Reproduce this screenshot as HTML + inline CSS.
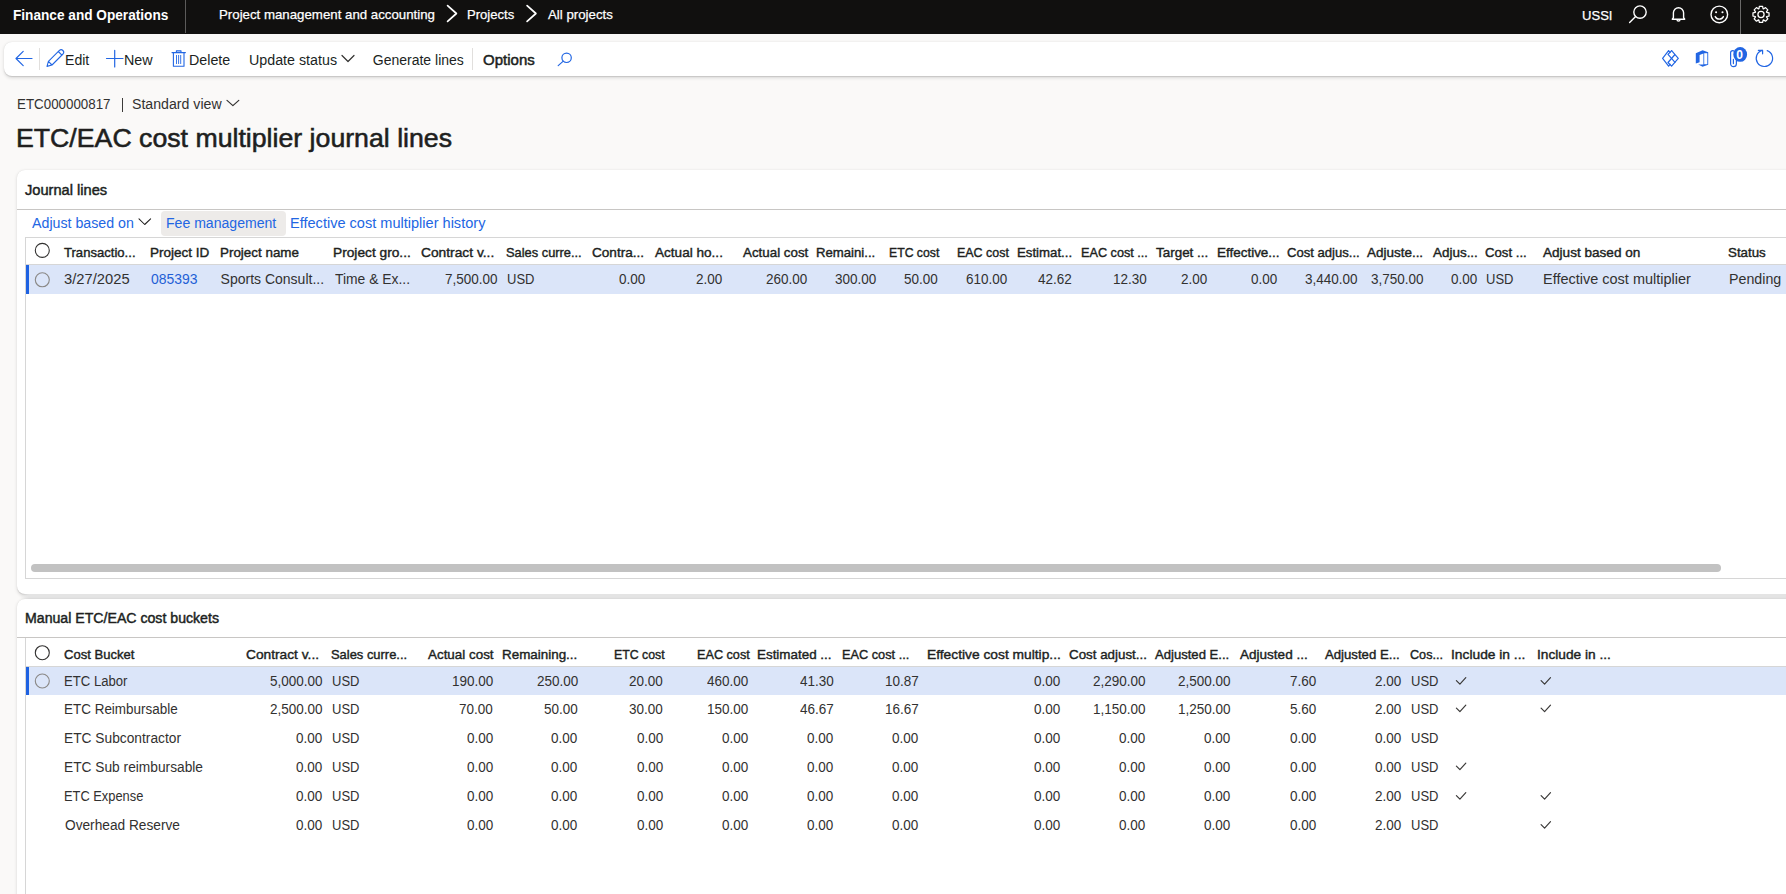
<!DOCTYPE html>
<html><head><meta charset="utf-8"><style>
html,body{margin:0;padding:0}
body{width:1786px;height:894px;overflow:hidden;position:relative;background:#faf9f8;font-family:"Liberation Sans",sans-serif}
.t{position:absolute;white-space:nowrap;line-height:1;transform-origin:0 0}
</style></head><body>
<div style="position:absolute;left:0px;top:0px;width:1786px;height:34px;background:#11100f"></div>
<div class="t" style="left:13.15px;top:8.14px;font-size:14px;color:#fff;font-weight:700;transform:scaleX(0.9739);">Finance and Operations</div>
<div style="position:absolute;left:185px;top:0px;width:1px;height:33px;background:#5c5b5a"></div>
<div class="t" style="left:218.90px;top:7.57px;font-size:13.5px;color:#fff;transform:scaleX(0.9822);-webkit-text-stroke:0.25px #fff;">Project management and accounting</div>
<div class="t" style="left:467.11px;top:7.57px;font-size:13.5px;color:#fff;transform:scaleX(0.9676);-webkit-text-stroke:0.25px #fff;">Projects</div>
<div class="t" style="left:547.70px;top:7.57px;font-size:13.5px;color:#fff;transform:scaleX(0.9817);-webkit-text-stroke:0.25px #fff;">All projects</div>
<svg style="position:absolute;left:0;top:0" width="1786" height="34"><g fill="none" stroke="#fff" stroke-width="1.4" stroke-linecap="round" stroke-linejoin="round"><path d="M447.6 5.6 L456.4 13.5 L447.6 21.4" stroke-width="1.7"/><path d="M527.1 5.6 L535.9 13.5 L527.1 21.4" stroke-width="1.7"/><circle cx="1640" cy="12.1" r="6.2"/><path d="M1635.6 16.6 L1629.6 22.4" stroke-width="1.4"/><path d="M1672.3 19.2 L1673.4 17.6 V12.8 A5.1 5.1 0 0 1 1683.6 12.8 V17.6 L1684.7 19.2 Z"/><path d="M1677 19.6 A1.5 1.5 0 0 0 1680 19.6"/><circle cx="1719.3" cy="14.4" r="8.3"/><path d="M1715.2 16.6 A4.6 4.6 0 0 0 1723.4 16.6"/></g><circle cx="1716.1" cy="12.2" r="1.05" fill="#fff"/><circle cx="1722.5" cy="12.2" r="1.05" fill="#fff"/><rect x="1740" y="0" width="1" height="34" fill="#6b6a69"/><g transform="translate(1761,14.4)" fill="none" stroke="#fff" stroke-width="1.25" stroke-linejoin="round"><path d="M-2.11 -5.62 L-1.63 -8.04 L1.63 -8.04 L2.11 -5.62 L2.48 -5.47 L4.53 -6.83 L6.83 -4.53 L5.47 -2.48 L5.62 -2.11 L8.04 -1.63 L8.04 1.63 L5.62 2.11 L5.47 2.48 L6.83 4.53 L4.53 6.83 L2.48 5.47 L2.11 5.62 L1.63 8.04 L-1.63 8.04 L-2.11 5.62 L-2.48 5.47 L-4.53 6.83 L-6.83 4.53 L-5.47 2.48 L-5.62 2.11 L-8.04 1.63 L-8.04 -1.63 L-5.62 -2.11 L-5.47 -2.48 L-6.83 -4.53 L-4.53 -6.83 L-2.48 -5.47 Z"/><circle r="3.1"/></g></svg>
<div class="t" style="left:1581.73px;top:8.57px;font-size:13.5px;color:#fff;transform:scaleX(0.9675);-webkit-text-stroke:0.25px #fff;">USSI</div>
<div style="position:absolute;left:4px;top:42px;width:1800px;height:34px;background:#fff;border-radius:8px;box-shadow:0 1.6px 3.6px rgba(0,0,0,.13),0 0.3px 0.9px rgba(0,0,0,.11)"></div>
<div style="position:absolute;left:39px;top:48px;width:1px;height:22px;background:#e1dfdd"></div>
<div style="position:absolute;left:472px;top:48px;width:1px;height:22px;background:#e1dfdd"></div>
<div class="t" style="left:64.87px;top:53.14px;font-size:14px;color:#201f1e;transform:scaleX(1.0055);">Edit</div>
<div class="t" style="left:124.35px;top:53.14px;font-size:14px;color:#201f1e;transform:scaleX(1.0233);">New</div>
<div class="t" style="left:188.85px;top:53.14px;font-size:14px;color:#201f1e;transform:scaleX(1.0194);">Delete</div>
<div class="t" style="left:248.98px;top:53.14px;font-size:14px;color:#201f1e;transform:scaleX(1.0191);">Update status</div>
<div class="t" style="left:372.77px;top:53.14px;font-size:14px;color:#201f1e;">Generate lines</div>
<div class="t" style="left:482.75px;top:52.72px;font-size:14.5px;color:#201f1e;transform:scaleX(1.0353);-webkit-text-stroke:0.5px #201f1e;">Options</div>
<svg style="position:absolute;left:0;top:0" width="1786" height="80"><g fill="none" stroke="#2266e3" stroke-width="1.2" stroke-linecap="round" stroke-linejoin="round"><path d="M16 58.5 H32 M23.2 51.3 L16 58.5 L23.2 65.7"/><path d="M47 66.4 L48.4 61.4 L59.4 50.4 A2.55 2.55 0 0 1 63 54 L52 65 Z M48.4 61.4 L52 65 M58.3 51.5 L61.9 55.1" stroke-width="1.1"/><path d="M106.5 58.5 H123 M114.7 50.3 V67"/><path d="M172 52.6 H185.4 M176.4 52.6 V50.9 H181 V52.6 M173.4 52.6 V66.2 H184 V52.6" stroke-width="1.1"/><path d="M176.5 55.4 V63.6 M178.6 55.4 V63.6 M180.7 55.4 V63.6" stroke-width="0.9"/><path d="M342 55.5 L348 61.5 L354 55.5" stroke="#323130"/><circle cx="566.6" cy="57.8" r="4.7"/><path d="M563.3 61.1 L558.2 65.6"/><path d="M1668.6 50.6 L1662.6 58.4 L1668.6 66.2 M1668.6 50.6 L1670.1 52.5 M1668.6 66.2 L1670.1 64.3"/><path d="M1671.6 50.6 L1678.3 58.4 L1671.6 66.2 L1668 62.5 L1675 54.5"/><path d="M1671.6 50.6 L1668 54.3 L1675 62.3"/><path d="M1767.2 50.6 A8.2 8.2 0 1 1 1762.2 50.4"/><path d="M1758.4 50.4 H1762.6 V53.8"/><path d="M1730.6 52.8 V63.8 A2.9 2.9 0 0 0 1736.4 63.8 V58 M1733.4 59.4 V63.6 M1730.6 52.8 A2.2 2.2 0 0 1 1735 52.8"/></g><path d="M1695.8 53.3 L1702.6 50.3 L1708.2 52.2 V64.8 L1702.6 66.7 L1698.2 64.4 L1703.4 64.6 V53.4 L1699.6 55 V62.2 L1695.8 63.4 Z" fill="#2266e3"/><rect x="1704.2" y="53.2" width="3.1" height="11" fill="#fff"/><ellipse cx="1740.2" cy="54.4" rx="6.9" ry="7.4" fill="#2266e3"/><text x="1739.5" y="58.9" fill="#fff" font-size="12" font-weight="700" text-anchor="middle" font-family="Liberation Sans">0</text></svg>
<div class="t" style="left:17.13px;top:97.14px;font-size:14px;color:#323130;transform:scaleX(0.9538);">ETC000000817</div>
<div style="position:absolute;left:122px;top:98px;width:1px;height:14px;background:#3b3a39"></div>
<div class="t" style="left:132.37px;top:97.14px;font-size:14px;color:#323130;transform:scaleX(1.0099);">Standard view</div>
<div class="t" style="left:15.82px;top:124.98px;font-size:26px;color:#201f1e;transform:scaleX(1.0264);-webkit-text-stroke:0.55px #201f1e;">ETC/EAC cost multiplier journal lines</div>
<svg style="position:absolute;left:0;top:0" width="300" height="120"><path d="M227 100.4 L232.9 105.6 L238.8 100.4" fill="none" stroke="#323130" stroke-width="1.2" stroke-linecap="round" stroke-linejoin="round"/></svg>
<div style="position:absolute;left:17px;top:170px;width:1800px;height:424px;background:#fff;border-radius:8px;box-shadow:0 1.6px 3.6px rgba(0,0,0,.13),0 0.3px 0.9px rgba(0,0,0,.11)"></div>
<div class="t" style="left:24.74px;top:183.14px;font-size:14px;color:#201f1e;transform:scaleX(1.0453);-webkit-text-stroke:0.45px #201f1e;">Journal lines</div>
<div style="position:absolute;left:17px;top:209px;width:1800px;height:1px;background:#c8c6c4"></div>
<div style="position:absolute;left:161px;top:211px;width:124.5px;height:24.5px;background:#edebe9;border-radius:4px"></div>
<div class="t" style="left:32.00px;top:216.14px;font-size:14px;color:#2266e3;transform:scaleX(1.0151);">Adjust based on</div>
<div class="t" style="left:165.87px;top:216.14px;font-size:14px;color:#2266e3;transform:scaleX(1.0046);">Fee management</div>
<div class="t" style="left:290.03px;top:216.14px;font-size:14px;color:#2266e3;transform:scaleX(1.0392);">Effective cost multiplier history</div>
<svg style="position:absolute;left:0;top:0" width="200" height="240"><path d="M139 218.9 L144.7 224.5 L150.6 218.9" fill="none" stroke="#201f1e" stroke-width="1.05" stroke-linecap="round" stroke-linejoin="round"/></svg>
<div style="position:absolute;left:25px;top:237px;width:1800px;height:342px;border:1px solid #d6d6d6;box-sizing:border-box;background:#fff"></div>
<div style="position:absolute;left:26px;top:264px;width:1800px;height:1px;background:#d6d6d6"></div>
<div style="position:absolute;left:26px;top:265px;width:1800px;height:29px;background:#dbe5f9"></div>
<div style="position:absolute;left:26px;top:265px;width:3px;height:29px;background:#1e62e2"></div>
<div style="position:absolute;left:31px;top:564px;width:1690px;height:8px;background:#c2c2c2;border-radius:4px"></div>
<svg style="position:absolute;left:0;top:0" width="60" height="300"><circle cx="42.3" cy="250.4" r="7" fill="none" stroke="#323130" stroke-width="1.1"/><circle cx="42.3" cy="279.8" r="7" fill="none" stroke="#8a8886" stroke-width="1.1"/></svg>
<div class="t" style="left:64.25px;top:246.39px;font-size:13px;color:#201f1e;transform:scaleX(1.0068);-webkit-text-stroke:0.4px #201f1e;">Transactio...</div>
<div class="t" style="left:149.86px;top:246.39px;font-size:13px;color:#201f1e;transform:scaleX(1.0402);-webkit-text-stroke:0.4px #201f1e;">Project ID</div>
<div class="t" style="left:219.67px;top:246.39px;font-size:13px;color:#201f1e;transform:scaleX(1.0307);-webkit-text-stroke:0.4px #201f1e;">Project name</div>
<div class="t" style="left:333.44px;top:246.39px;font-size:13px;color:#201f1e;transform:scaleX(1.0555);-webkit-text-stroke:0.4px #201f1e;">Project gro...</div>
<div class="t" style="left:421.14px;top:246.39px;font-size:13px;color:#201f1e;transform:scaleX(1.0597);-webkit-text-stroke:0.4px #201f1e;">Contract v...</div>
<div class="t" style="left:506.38px;top:246.39px;font-size:13px;color:#201f1e;transform:scaleX(0.9883);-webkit-text-stroke:0.4px #201f1e;">Sales curre...</div>
<div class="t" style="left:591.65px;top:246.39px;font-size:13px;color:#201f1e;transform:scaleX(1.0452);-webkit-text-stroke:0.4px #201f1e;">Contra...</div>
<div class="t" style="left:654.80px;top:246.39px;font-size:13px;color:#201f1e;transform:scaleX(1.0442);-webkit-text-stroke:0.4px #201f1e;">Actual ho...</div>
<div class="t" style="left:742.80px;top:246.39px;font-size:13px;color:#201f1e;transform:scaleX(1.0268);-webkit-text-stroke:0.4px #201f1e;">Actual cost</div>
<div class="t" style="left:816.19px;top:246.39px;font-size:13px;color:#201f1e;transform:scaleX(1.0129);-webkit-text-stroke:0.4px #201f1e;">Remaini...</div>
<div class="t" style="left:888.76px;top:246.39px;font-size:13px;color:#201f1e;transform:scaleX(0.9413);-webkit-text-stroke:0.4px #201f1e;">ETC cost</div>
<div class="t" style="left:956.64px;top:246.39px;font-size:13px;color:#201f1e;transform:scaleX(0.9581);-webkit-text-stroke:0.4px #201f1e;">EAC cost</div>
<div class="t" style="left:1016.68px;top:246.39px;font-size:13px;color:#201f1e;transform:scaleX(1.0168);-webkit-text-stroke:0.4px #201f1e;">Estimat...</div>
<div class="t" style="left:1081.03px;top:246.39px;font-size:13px;color:#201f1e;transform:scaleX(0.9744);-webkit-text-stroke:0.4px #201f1e;">EAC cost ...</div>
<div class="t" style="left:1156.04px;top:246.39px;font-size:13px;color:#201f1e;transform:scaleX(1.0335);-webkit-text-stroke:0.4px #201f1e;">Target ...</div>
<div class="t" style="left:1216.57px;top:246.39px;font-size:13px;color:#201f1e;transform:scaleX(1.0347);-webkit-text-stroke:0.4px #201f1e;">Effective...</div>
<div class="t" style="left:1286.87px;top:246.39px;font-size:13px;color:#201f1e;transform:scaleX(1.0057);-webkit-text-stroke:0.4px #201f1e;">Cost adjus...</div>
<div class="t" style="left:1367.00px;top:246.39px;font-size:13px;color:#201f1e;transform:scaleX(1.0353);-webkit-text-stroke:0.4px #201f1e;">Adjuste...</div>
<div class="t" style="left:1433.30px;top:246.39px;font-size:13px;color:#201f1e;transform:scaleX(1.0343);-webkit-text-stroke:0.4px #201f1e;">Adjus...</div>
<div class="t" style="left:1485.37px;top:246.39px;font-size:13px;color:#201f1e;transform:scaleX(1.0127);-webkit-text-stroke:0.4px #201f1e;">Cost ...</div>
<div class="t" style="left:1542.50px;top:246.39px;font-size:13px;color:#201f1e;transform:scaleX(1.0436);-webkit-text-stroke:0.4px #201f1e;">Adjust based on</div>
<div class="t" style="left:1727.76px;top:246.39px;font-size:13px;color:#201f1e;transform:scaleX(1.0238);-webkit-text-stroke:0.4px #201f1e;">Status</div>
<div class="t" style="left:64.47px;top:272.14px;font-size:14px;color:#323130;transform:scaleX(1.0531);">3/27/2025</div>
<div class="t" style="left:150.90px;top:272.14px;font-size:14px;color:#1f5fd6;transform:scaleX(0.9951);">085393</div>
<div class="t" style="left:220.57px;top:272.14px;font-size:14px;color:#323130;">Sports Consult...</div>
<div class="t" style="left:334.95px;top:272.14px;font-size:14px;color:#323130;transform:scaleX(0.9912);">Time &amp; Ex...</div>
<div class="t" style="left:507.37px;top:272.14px;font-size:14px;color:#323130;transform:scaleX(0.9286);">USD</div>
<div class="t" style="left:1486.27px;top:272.14px;font-size:14px;color:#323130;transform:scaleX(0.9286);">USD</div>
<div class="t" style="left:1542.84px;top:272.14px;font-size:14px;color:#323130;transform:scaleX(1.0344);">Effective cost multiplier</div>
<div class="t" style="left:1728.66px;top:272.14px;font-size:14px;color:#323130;transform:scaleX(1.0167);">Pending</div>
<div class="t" style="left:444.89px;top:272.14px;font-size:14px;color:#323130;transform:scaleX(0.9650);">7,500.00</div>
<div class="t" style="left:618.89px;top:272.14px;font-size:14px;color:#323130;transform:scaleX(0.9650);">0.00</div>
<div class="t" style="left:695.69px;top:272.14px;font-size:14px;color:#323130;transform:scaleX(0.9650);">2.00</div>
<div class="t" style="left:765.53px;top:272.14px;font-size:14px;color:#323130;transform:scaleX(0.9650);">260.00</div>
<div class="t" style="left:835.23px;top:272.14px;font-size:14px;color:#323130;transform:scaleX(0.9650);">300.00</div>
<div class="t" style="left:904.21px;top:272.14px;font-size:14px;color:#323130;transform:scaleX(0.9650);">50.00</div>
<div class="t" style="left:966.23px;top:272.14px;font-size:14px;color:#323130;transform:scaleX(0.9650);">610.00</div>
<div class="t" style="left:1038.33px;top:272.14px;font-size:14px;color:#323130;transform:scaleX(0.9650);">42.62</div>
<div class="t" style="left:1112.71px;top:272.14px;font-size:14px;color:#323130;transform:scaleX(0.9650);">12.30</div>
<div class="t" style="left:1181.39px;top:272.14px;font-size:14px;color:#323130;transform:scaleX(0.9650);">2.00</div>
<div class="t" style="left:1251.19px;top:272.14px;font-size:14px;color:#323130;transform:scaleX(0.9650);">0.00</div>
<div class="t" style="left:1305.09px;top:272.14px;font-size:14px;color:#323130;transform:scaleX(0.9650);">3,440.00</div>
<div class="t" style="left:1371.39px;top:272.14px;font-size:14px;color:#323130;transform:scaleX(0.9650);">3,750.00</div>
<div class="t" style="left:1450.59px;top:272.14px;font-size:14px;color:#323130;transform:scaleX(0.9650);">0.00</div>
<div style="position:absolute;left:20px;top:594px;width:1800px;height:5px;background:linear-gradient(90deg,rgba(228,228,228,0),#e4e4e4 9px)"></div>
<div style="position:absolute;left:17px;top:599px;width:1800px;height:400px;background:#fff;border-radius:8px;box-shadow:0 1.6px 3.6px rgba(0,0,0,.13),0 0.3px 0.9px rgba(0,0,0,.11)"></div>
<div class="t" style="left:24.76px;top:610.74px;font-size:14px;color:#201f1e;transform:scaleX(1.0093);-webkit-text-stroke:0.45px #201f1e;">Manual ETC/EAC cost buckets</div>
<div style="position:absolute;left:17px;top:637px;width:1800px;height:1px;background:#c8c6c4"></div>
<div style="position:absolute;left:25px;top:638px;width:1px;height:300px;background:#d6d6d6"></div>
<div style="position:absolute;left:26px;top:666px;width:1800px;height:1px;background:#d6d6d6"></div>
<div style="position:absolute;left:26px;top:667px;width:1800px;height:28px;background:#dbe5f9"></div>
<div style="position:absolute;left:26px;top:667px;width:3px;height:28px;background:#1e62e2"></div>
<svg style="position:absolute;left:0;top:600px" width="60" height="120"><circle cx="42.3" cy="52.7" r="7" fill="none" stroke="#323130" stroke-width="1.1"/><circle cx="42.3" cy="81" r="7" fill="none" stroke="#8a8886" stroke-width="1.1"/></svg>
<div class="t" style="left:63.87px;top:647.99px;font-size:13px;color:#201f1e;transform:scaleX(1.0047);-webkit-text-stroke:0.4px #201f1e;">Cost Bucket</div>
<div class="t" style="left:245.84px;top:647.99px;font-size:13px;color:#201f1e;transform:scaleX(1.0568);-webkit-text-stroke:0.4px #201f1e;">Contract v...</div>
<div class="t" style="left:330.98px;top:647.99px;font-size:13px;color:#201f1e;transform:scaleX(0.9937);-webkit-text-stroke:0.4px #201f1e;">Sales curre...</div>
<div class="t" style="left:428.20px;top:647.99px;font-size:13px;color:#201f1e;transform:scaleX(1.0315);-webkit-text-stroke:0.4px #201f1e;">Actual cost</div>
<div class="t" style="left:501.57px;top:647.99px;font-size:13px;color:#201f1e;transform:scaleX(1.0314);-webkit-text-stroke:0.4px #201f1e;">Remaining...</div>
<div class="t" style="left:614.15px;top:647.99px;font-size:13px;color:#201f1e;transform:scaleX(0.9470);-webkit-text-stroke:0.4px #201f1e;">ETC cost</div>
<div class="t" style="left:697.33px;top:647.99px;font-size:13px;color:#201f1e;transform:scaleX(0.9732);-webkit-text-stroke:0.4px #201f1e;">EAC cost</div>
<div class="t" style="left:756.97px;top:647.99px;font-size:13px;color:#201f1e;transform:scaleX(1.0310);-webkit-text-stroke:0.4px #201f1e;">Estimated ...</div>
<div class="t" style="left:842.22px;top:647.99px;font-size:13px;color:#201f1e;transform:scaleX(0.9805);-webkit-text-stroke:0.4px #201f1e;">EAC cost ...</div>
<div class="t" style="left:927.34px;top:647.99px;font-size:13px;color:#201f1e;transform:scaleX(1.0602);-webkit-text-stroke:0.4px #201f1e;">Effective cost multip...</div>
<div class="t" style="left:1068.96px;top:647.99px;font-size:13px;color:#201f1e;transform:scaleX(1.0266);-webkit-text-stroke:0.4px #201f1e;">Cost adjust...</div>
<div class="t" style="left:1155.30px;top:647.99px;font-size:13px;color:#201f1e;transform:scaleX(1.0065);-webkit-text-stroke:0.4px #201f1e;">Adjusted E...</div>
<div class="t" style="left:1240.00px;top:647.99px;font-size:13px;color:#201f1e;transform:scaleX(1.0411);-webkit-text-stroke:0.4px #201f1e;">Adjusted ...</div>
<div class="t" style="left:1325.40px;top:647.99px;font-size:13px;color:#201f1e;transform:scaleX(1.0134);-webkit-text-stroke:0.4px #201f1e;">Adjusted E...</div>
<div class="t" style="left:1410.09px;top:647.99px;font-size:13px;color:#201f1e;transform:scaleX(0.9705);-webkit-text-stroke:0.4px #201f1e;">Cos...</div>
<div class="t" style="left:1451.21px;top:647.99px;font-size:13px;color:#201f1e;transform:scaleX(1.0608);-webkit-text-stroke:0.4px #201f1e;">Include in ...</div>
<div class="t" style="left:1536.51px;top:647.99px;font-size:13px;color:#201f1e;transform:scaleX(1.0534);-webkit-text-stroke:0.4px #201f1e;">Include in ...</div>
<div class="t" style="left:64.35px;top:674.14px;font-size:14px;color:#323130;transform:scaleX(0.9371);">ETC Labor</div>
<div class="t" style="left:269.89px;top:674.14px;font-size:14px;color:#323130;transform:scaleX(0.9650);">5,000.00</div>
<div class="t" style="left:451.63px;top:674.14px;font-size:14px;color:#323130;transform:scaleX(0.9650);">190.00</div>
<div class="t" style="left:536.53px;top:674.14px;font-size:14px;color:#323130;transform:scaleX(0.9650);">250.00</div>
<div class="t" style="left:629.21px;top:674.14px;font-size:14px;color:#323130;transform:scaleX(0.9650);">20.00</div>
<div class="t" style="left:707.03px;top:674.14px;font-size:14px;color:#323130;transform:scaleX(0.9650);">460.00</div>
<div class="t" style="left:799.91px;top:674.14px;font-size:14px;color:#323130;transform:scaleX(0.9650);">41.30</div>
<div class="t" style="left:884.83px;top:674.14px;font-size:14px;color:#323130;transform:scaleX(0.9650);">10.87</div>
<div class="t" style="left:1034.19px;top:674.14px;font-size:14px;color:#323130;transform:scaleX(0.9650);">0.00</div>
<div class="t" style="left:1093.09px;top:674.14px;font-size:14px;color:#323130;transform:scaleX(0.9650);">2,290.00</div>
<div class="t" style="left:1177.89px;top:674.14px;font-size:14px;color:#323130;transform:scaleX(0.9650);">2,500.00</div>
<div class="t" style="left:1289.59px;top:674.14px;font-size:14px;color:#323130;transform:scaleX(0.9650);">7.60</div>
<div class="t" style="left:1374.79px;top:674.14px;font-size:14px;color:#323130;transform:scaleX(0.9650);">2.00</div>
<div class="t" style="left:331.87px;top:674.14px;font-size:14px;color:#323130;transform:scaleX(0.9286);">USD</div>
<div class="t" style="left:1411.07px;top:674.14px;font-size:14px;color:#323130;transform:scaleX(0.9286);">USD</div>
<div class="t" style="left:64.32px;top:701.74px;font-size:14px;color:#323130;transform:scaleX(0.9614);">ETC Reimbursable</div>
<div class="t" style="left:269.89px;top:701.74px;font-size:14px;color:#323130;transform:scaleX(0.9650);">2,500.00</div>
<div class="t" style="left:459.11px;top:701.74px;font-size:14px;color:#323130;transform:scaleX(0.9650);">70.00</div>
<div class="t" style="left:544.01px;top:701.74px;font-size:14px;color:#323130;transform:scaleX(0.9650);">50.00</div>
<div class="t" style="left:629.21px;top:701.74px;font-size:14px;color:#323130;transform:scaleX(0.9650);">30.00</div>
<div class="t" style="left:707.03px;top:701.74px;font-size:14px;color:#323130;transform:scaleX(0.9650);">150.00</div>
<div class="t" style="left:800.03px;top:701.74px;font-size:14px;color:#323130;transform:scaleX(0.9650);">46.67</div>
<div class="t" style="left:884.83px;top:701.74px;font-size:14px;color:#323130;transform:scaleX(0.9650);">16.67</div>
<div class="t" style="left:1034.19px;top:701.74px;font-size:14px;color:#323130;transform:scaleX(0.9650);">0.00</div>
<div class="t" style="left:1093.09px;top:701.74px;font-size:14px;color:#323130;transform:scaleX(0.9650);">1,150.00</div>
<div class="t" style="left:1177.89px;top:701.74px;font-size:14px;color:#323130;transform:scaleX(0.9650);">1,250.00</div>
<div class="t" style="left:1289.59px;top:701.74px;font-size:14px;color:#323130;transform:scaleX(0.9650);">5.60</div>
<div class="t" style="left:1374.79px;top:701.74px;font-size:14px;color:#323130;transform:scaleX(0.9650);">2.00</div>
<div class="t" style="left:331.87px;top:701.74px;font-size:14px;color:#323130;transform:scaleX(0.9286);">USD</div>
<div class="t" style="left:1411.07px;top:701.74px;font-size:14px;color:#323130;transform:scaleX(0.9286);">USD</div>
<div class="t" style="left:64.29px;top:730.74px;font-size:14px;color:#323130;transform:scaleX(0.9826);">ETC Subcontractor</div>
<div class="t" style="left:296.19px;top:730.74px;font-size:14px;color:#323130;transform:scaleX(0.9650);">0.00</div>
<div class="t" style="left:466.59px;top:730.74px;font-size:14px;color:#323130;transform:scaleX(0.9650);">0.00</div>
<div class="t" style="left:551.49px;top:730.74px;font-size:14px;color:#323130;transform:scaleX(0.9650);">0.00</div>
<div class="t" style="left:636.69px;top:730.74px;font-size:14px;color:#323130;transform:scaleX(0.9650);">0.00</div>
<div class="t" style="left:721.99px;top:730.74px;font-size:14px;color:#323130;transform:scaleX(0.9650);">0.00</div>
<div class="t" style="left:807.39px;top:730.74px;font-size:14px;color:#323130;transform:scaleX(0.9650);">0.00</div>
<div class="t" style="left:892.19px;top:730.74px;font-size:14px;color:#323130;transform:scaleX(0.9650);">0.00</div>
<div class="t" style="left:1034.19px;top:730.74px;font-size:14px;color:#323130;transform:scaleX(0.9650);">0.00</div>
<div class="t" style="left:1119.39px;top:730.74px;font-size:14px;color:#323130;transform:scaleX(0.9650);">0.00</div>
<div class="t" style="left:1204.19px;top:730.74px;font-size:14px;color:#323130;transform:scaleX(0.9650);">0.00</div>
<div class="t" style="left:1289.59px;top:730.74px;font-size:14px;color:#323130;transform:scaleX(0.9650);">0.00</div>
<div class="t" style="left:1374.79px;top:730.74px;font-size:14px;color:#323130;transform:scaleX(0.9650);">0.00</div>
<div class="t" style="left:331.87px;top:730.74px;font-size:14px;color:#323130;transform:scaleX(0.9286);">USD</div>
<div class="t" style="left:1411.07px;top:730.74px;font-size:14px;color:#323130;transform:scaleX(0.9286);">USD</div>
<div class="t" style="left:64.30px;top:759.74px;font-size:14px;color:#323130;transform:scaleX(0.9816);">ETC Sub reimbursable</div>
<div class="t" style="left:296.19px;top:759.74px;font-size:14px;color:#323130;transform:scaleX(0.9650);">0.00</div>
<div class="t" style="left:466.59px;top:759.74px;font-size:14px;color:#323130;transform:scaleX(0.9650);">0.00</div>
<div class="t" style="left:551.49px;top:759.74px;font-size:14px;color:#323130;transform:scaleX(0.9650);">0.00</div>
<div class="t" style="left:636.69px;top:759.74px;font-size:14px;color:#323130;transform:scaleX(0.9650);">0.00</div>
<div class="t" style="left:721.99px;top:759.74px;font-size:14px;color:#323130;transform:scaleX(0.9650);">0.00</div>
<div class="t" style="left:807.39px;top:759.74px;font-size:14px;color:#323130;transform:scaleX(0.9650);">0.00</div>
<div class="t" style="left:892.19px;top:759.74px;font-size:14px;color:#323130;transform:scaleX(0.9650);">0.00</div>
<div class="t" style="left:1034.19px;top:759.74px;font-size:14px;color:#323130;transform:scaleX(0.9650);">0.00</div>
<div class="t" style="left:1119.39px;top:759.74px;font-size:14px;color:#323130;transform:scaleX(0.9650);">0.00</div>
<div class="t" style="left:1204.19px;top:759.74px;font-size:14px;color:#323130;transform:scaleX(0.9650);">0.00</div>
<div class="t" style="left:1289.59px;top:759.74px;font-size:14px;color:#323130;transform:scaleX(0.9650);">0.00</div>
<div class="t" style="left:1374.79px;top:759.74px;font-size:14px;color:#323130;transform:scaleX(0.9650);">0.00</div>
<div class="t" style="left:331.87px;top:759.74px;font-size:14px;color:#323130;transform:scaleX(0.9286);">USD</div>
<div class="t" style="left:1411.07px;top:759.74px;font-size:14px;color:#323130;transform:scaleX(0.9286);">USD</div>
<div class="t" style="left:64.37px;top:789.14px;font-size:14px;color:#323130;transform:scaleX(0.9182);">ETC Expense</div>
<div class="t" style="left:296.19px;top:789.14px;font-size:14px;color:#323130;transform:scaleX(0.9650);">0.00</div>
<div class="t" style="left:466.59px;top:789.14px;font-size:14px;color:#323130;transform:scaleX(0.9650);">0.00</div>
<div class="t" style="left:551.49px;top:789.14px;font-size:14px;color:#323130;transform:scaleX(0.9650);">0.00</div>
<div class="t" style="left:636.69px;top:789.14px;font-size:14px;color:#323130;transform:scaleX(0.9650);">0.00</div>
<div class="t" style="left:721.99px;top:789.14px;font-size:14px;color:#323130;transform:scaleX(0.9650);">0.00</div>
<div class="t" style="left:807.39px;top:789.14px;font-size:14px;color:#323130;transform:scaleX(0.9650);">0.00</div>
<div class="t" style="left:892.19px;top:789.14px;font-size:14px;color:#323130;transform:scaleX(0.9650);">0.00</div>
<div class="t" style="left:1034.19px;top:789.14px;font-size:14px;color:#323130;transform:scaleX(0.9650);">0.00</div>
<div class="t" style="left:1119.39px;top:789.14px;font-size:14px;color:#323130;transform:scaleX(0.9650);">0.00</div>
<div class="t" style="left:1204.19px;top:789.14px;font-size:14px;color:#323130;transform:scaleX(0.9650);">0.00</div>
<div class="t" style="left:1289.59px;top:789.14px;font-size:14px;color:#323130;transform:scaleX(0.9650);">0.00</div>
<div class="t" style="left:1374.79px;top:789.14px;font-size:14px;color:#323130;transform:scaleX(0.9650);">2.00</div>
<div class="t" style="left:331.87px;top:789.14px;font-size:14px;color:#323130;transform:scaleX(0.9286);">USD</div>
<div class="t" style="left:1411.07px;top:789.14px;font-size:14px;color:#323130;transform:scaleX(0.9286);">USD</div>
<div class="t" style="left:64.79px;top:818.14px;font-size:14px;color:#323130;transform:scaleX(0.9781);">Overhead Reserve</div>
<div class="t" style="left:296.19px;top:818.14px;font-size:14px;color:#323130;transform:scaleX(0.9650);">0.00</div>
<div class="t" style="left:466.59px;top:818.14px;font-size:14px;color:#323130;transform:scaleX(0.9650);">0.00</div>
<div class="t" style="left:551.49px;top:818.14px;font-size:14px;color:#323130;transform:scaleX(0.9650);">0.00</div>
<div class="t" style="left:636.69px;top:818.14px;font-size:14px;color:#323130;transform:scaleX(0.9650);">0.00</div>
<div class="t" style="left:721.99px;top:818.14px;font-size:14px;color:#323130;transform:scaleX(0.9650);">0.00</div>
<div class="t" style="left:807.39px;top:818.14px;font-size:14px;color:#323130;transform:scaleX(0.9650);">0.00</div>
<div class="t" style="left:892.19px;top:818.14px;font-size:14px;color:#323130;transform:scaleX(0.9650);">0.00</div>
<div class="t" style="left:1034.19px;top:818.14px;font-size:14px;color:#323130;transform:scaleX(0.9650);">0.00</div>
<div class="t" style="left:1119.39px;top:818.14px;font-size:14px;color:#323130;transform:scaleX(0.9650);">0.00</div>
<div class="t" style="left:1204.19px;top:818.14px;font-size:14px;color:#323130;transform:scaleX(0.9650);">0.00</div>
<div class="t" style="left:1289.59px;top:818.14px;font-size:14px;color:#323130;transform:scaleX(0.9650);">0.00</div>
<div class="t" style="left:1374.79px;top:818.14px;font-size:14px;color:#323130;transform:scaleX(0.9650);">2.00</div>
<div class="t" style="left:331.87px;top:818.14px;font-size:14px;color:#323130;transform:scaleX(0.9286);">USD</div>
<div class="t" style="left:1411.07px;top:818.14px;font-size:14px;color:#323130;transform:scaleX(0.9286);">USD</div>
<svg style="position:absolute;left:0;top:0" width="1786" height="894"><g fill="none" stroke="#3b3a39" stroke-width="1.2" stroke-linecap="round" stroke-linejoin="round"><path d="M1456.4 680.6 L1459.9 684.1 L1465.8 677.6"/><path d="M1541.1 680.6 L1544.6 684.1 L1550.5 677.6"/><path d="M1456.4 708.2 L1459.9 711.7 L1465.8 705.2"/><path d="M1541.1 708.2 L1544.6 711.7 L1550.5 705.2"/><path d="M1456.4 766.2 L1459.9 769.7 L1465.8 763.2"/><path d="M1456.4 795.6 L1459.9 799.1 L1465.8 792.6"/><path d="M1541.1 795.6 L1544.6 799.1 L1550.5 792.6"/><path d="M1541.1 824.6 L1544.6 828.1 L1550.5 821.6"/></g></svg>
</body></html>
